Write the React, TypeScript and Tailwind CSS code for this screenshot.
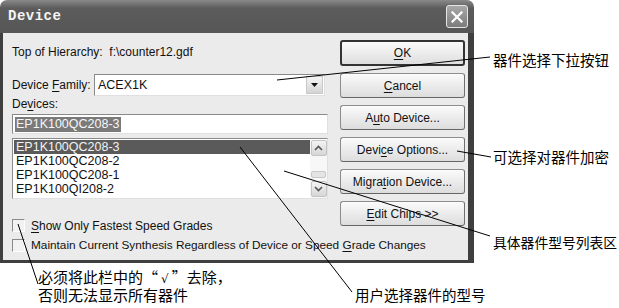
import React from 'react';

const U = ({ children }: { children: React.ReactNode }) => (
  <span className="underline decoration-1 underline-offset-[2px]">{children}</span>
);

function Btn({ children, primary }: { children: React.ReactNode; primary?: boolean }) {
  return (
    <div
      className={
        primary
          ? 'h-[26px] flex items-center justify-center rounded-[3px] border-2 border-[#333333] bg-gradient-to-b from-[#fbfbfb] to-[#dedede] text-[12px] text-[#111111]'
          : 'h-[25px] flex items-center justify-center rounded-[3px] border border-[#8c8c8c] border-b-[#666666] border-r-[#707070] bg-gradient-to-b from-[#fbfbfb] to-[#dddddd] text-[12px] text-[#111111]'
      }
    >
      {children}
    </div>
  );
}

function CheckBox() {
  return <div className="w-[13px] h-[13px] border border-t-[#8a8a8a] border-l-[#8a8a8a] border-b-white border-r-white bg-[#f2f2f2]" />;
}

function ScrollArrow({ up }: { up?: boolean }) {
  return (
    <div className="h-[16px] w-[16px] rounded-[2px] border border-[#c4c4c4] bg-gradient-to-b from-[#f4f4f4] to-[#d6d6d6] flex items-center justify-center">
      <svg width="9" height="6" viewBox="0 0 9 6">
        <path d={up ? 'M1 5 L4.5 1.5 L8 5' : 'M1 1 L4.5 4.5 L8 1'} fill="none" stroke="#555555" strokeWidth="1.6" />
      </svg>
    </div>
  );
}

export default function App() {
  const devices = ['EP1K100QC208-3', 'EP1K100QC208-2', 'EP1K100QC208-1', 'EP1K100QI208-2'];
  const cjk = { fontFamily: '"Noto Sans CJK SC", "Noto Sans", sans-serif' };

  return (
    <div className="relative w-[619px] h-[308px] bg-white overflow-hidden font-['Liberation_Sans',Arial,sans-serif] text-[12px] text-[#111111]">
      <div className="flex">
        {/* dialog */}
        <div className="w-[474px] h-[263px] flex flex-col">
          <div className="h-[33px] rounded-t-[7px] bg-gradient-to-b from-[#8a8a8a] via-[#5c5c5c] via-25% to-[#565656] flex items-center justify-between pl-[8px] pr-[6px]">
            <span className="font-['Liberation_Mono',monospace] font-bold text-[14px] text-[#f4f4f4] tracking-[0.5px]">Device</span>
            <div className="w-[22px] h-[23px] rounded-[3px] border border-[#e6e6e6] bg-gradient-to-b from-[#a8a8a8] to-[#7c7c7c] flex items-center justify-center">
              <svg width="12" height="12" viewBox="0 0 12 12">
                <path d="M1.5 1.5 L10.5 10.5 M10.5 1.5 L1.5 10.5" stroke="#ffffff" strokeWidth="2.2" strokeLinecap="square" />
              </svg>
            </div>
          </div>
          <div className="flex-1 flex flex-col bg-[#ebebeb] border-l-[3px] border-r-[6px] border-b-[3px] border-[#3f3f3f] pl-[9px] pr-[3px]">
            <div className="flex gap-[12px] pt-[7px]">
              {/* left column */}
              <div className="w-[316px] flex flex-col">
                <div className="h-[24px] flex items-center">Top of Hierarchy:&nbsp; f:\counter12.gdf</div>
                <div className="mt-[10px] h-[22px] flex items-center">
                  <span className="w-[82px]">Device <U>F</U>amily:</span>
                  <div className="w-[231px] h-[22px] bg-white border border-t-[#8a8a8a] border-l-[#8a8a8a] border-b-[#e0e0e0] border-r-[#e0e0e0] flex items-center justify-between pl-[3px] pr-[1px]">
                    <span className="text-[12.5px]">ACEX1K</span>
                    <div className="w-[17px] h-[18px] bg-gradient-to-b from-[#f4f4f4] to-[#d4d4d4] border border-[#c8c8c8] flex items-center justify-center">
                      <svg width="7" height="4" viewBox="0 0 7 4">
                        <path d="M0 0 H7 L3.5 4 Z" fill="#111111" />
                      </svg>
                    </div>
                  </div>
                </div>
                <div className="h-[16px] flex items-center">De<U>v</U>ices:</div>
                <div className="mt-[2px] h-[20px] bg-white border border-t-[#8a8a8a] border-l-[#8a8a8a] border-b-[#e0e0e0] border-r-[#e0e0e0] flex items-center pl-[2px]">
                  <span className="bg-[#7a7a7a] text-[#f6f6f6] text-[12.5px] leading-[15px] px-[1px]">EP1K100QC208-3</span>
                </div>
                <div className="mt-[4px] h-[61px] bg-white border border-t-[#8a8a8a] border-l-[#8a8a8a] border-b-[#e0e0e0] border-r-[#e0e0e0] flex pl-[1px] pt-[1px]">
                  <div className="flex-1 flex flex-col">
                    {devices.map((d, i) => (
                      <div
                        key={d}
                        className={
                          i === 0
                            ? 'h-[14px] leading-[14px] pl-[2px] bg-[#5a5a5a] text-[#f2f2f2] text-[12.5px]'
                            : 'h-[14px] leading-[14px] pl-[2px] text-[12.5px]'
                        }
                      >
                        {d}
                      </div>
                    ))}
                  </div>
                  <div className="w-[17px] flex flex-col items-center justify-between bg-[#f7f7f7] pb-[1px]">
                    <ScrollArrow up />
                    <div className="w-[15px] h-[7px] rounded-[2px] border border-[#c8c8c8] bg-[#e4e4e4] mt-[12px]" />
                    <ScrollArrow />
                  </div>
                </div>
                <div className="mt-[20px] h-[13px] flex items-center gap-[6px]">
                  <CheckBox />
                  <span><U>S</U>how Only Fastest Speed Grades</span>
                </div>
              </div>
              {/* right column */}
              <div className="w-[125px] flex flex-col gap-[7px]">
                <Btn primary>
                  <U>O</U>K
                </Btn>
                <Btn>
                  <U>C</U>ancel
                </Btn>
                <Btn>
                  A<U>u</U>to Device...
                </Btn>
                <Btn>
                  Devi<U>c</U>e Options...
                </Btn>
                <Btn>
                  Migra<U>t</U>ion Device...
                </Btn>
                <Btn>
                  <U>E</U>dit Chips &gt;&gt;
                </Btn>
              </div>
            </div>
            <div className="mt-[7px] h-[13px] flex items-center gap-[6px] text-[11.8px]">
              <CheckBox />
              <span>
                Maintain Current Synthesis Regardless of Device or Speed <U>G</U>rade Changes
              </span>
            </div>
          </div>
        </div>
        {/* right annotations */}
        <div className="flex-1 flex flex-col pl-[19px] text-[14.5px] leading-[18px] text-black whitespace-nowrap" style={cjk}>
          <div className="mt-[51px]">器件选择下拉按钮</div>
          <div className="mt-[79px]">可选择对器件加密</div>
          <div className="mt-[67px] text-[13.8px]">具体器件型号列表区</div>
        </div>
      </div>
      {/* bottom annotations */}
      <div className="flex text-black whitespace-nowrap" style={cjk}>
        <div className="w-[355px] pl-[38px] pt-[5px] text-[15px] leading-[18px]">
          <div className="h-[18px]">
            必须将此栏中的“<span className="font-['DejaVu_Sans',sans-serif] text-[12px] leading-none mx-[3px]">√</span>”去除，
          </div>
          <div className="h-[18px]">否则无法显示所有器件</div>
        </div>
        <div className="pt-[23px] text-[14.5px] leading-[17px]">用户选择器件的型号</div>
      </div>
      {/* leader lines */}
      <svg className="absolute inset-0 pointer-events-none" width="619" height="308" viewBox="0 0 619 308">
        <g stroke="#000000" strokeWidth="1" fill="none">
          <line x1="277" y1="80" x2="490" y2="57" />
          <line x1="457" y1="151" x2="491" y2="157" />
          <line x1="284" y1="171" x2="490" y2="236" />
          <line x1="240" y1="147" x2="352" y2="292" />
          <line x1="18" y1="224" x2="38" y2="284" />
        </g>
      </svg>
    </div>
  );
}
